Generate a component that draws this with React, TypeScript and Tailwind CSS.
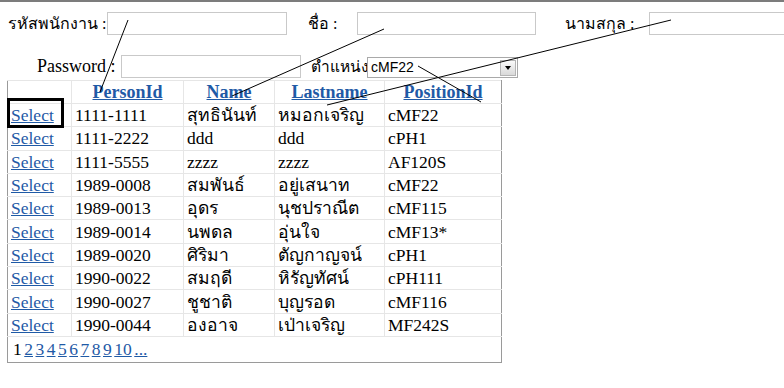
const rows = [
  ['1111-1111', 'สุทธินันท์', 'หมอกเจริญ', 'cMF22'],
  ['1111-2222', 'ddd', 'ddd', 'cPH1'],
  ['1111-5555', 'zzzz', 'zzzz', 'AF120S'],
  ['1989-0008', 'สมพันธ์', 'อยู่เสนาท', 'cMF22'],
  ['1989-0013', 'อุดร', 'นุชปราณีต', 'cMF115'],
  ['1989-0014', 'นพดล', 'อุ่นใจ', 'cMF13*'],
  ['1989-0020', 'ศิริมา', 'ตัญกาญจน์', 'cPH1'],
  ['1990-0022', 'สมฤดี', 'หิรัญทัศน์', 'cPH111'],
  ['1990-0027', 'ชูชาติ', 'บุญรอด', 'cMF116'],
  ['1990-0044', 'องอาจ', 'เป่าเจริญ', 'MF242S'],
];

const headers = ['PersonId', 'Name', 'Lastname', 'PositionId'];

function TextBox({ className }: { className: string }) {
  return <div className={`shrink-0 h-[23px] border border-[#c9c9c9] bg-white ${className}`} />;
}

export default function App() {
  return (
    <div className="relative w-[784px] h-[388px] overflow-hidden bg-white border-t-2 border-[#7c7c7c] font-['Liberation_Serif',serif] text-[17.5px] text-black">
      {/* search form */}
      <div className="flex items-center h-[23px] mt-[10px] pl-[8px]">
        <span className="shrink-0 w-[99px] whitespace-nowrap text-[16px]">รหัสพนักงาน :</span>
        <TextBox className="w-[180px]" />
        <span className="shrink-0 ml-[21px] w-[49px] whitespace-nowrap text-[16px]">ชื่อ :</span>
        <TextBox className="w-[179px]" />
        <span className="shrink-0 ml-[29px] w-[84px] whitespace-nowrap text-[16px]">นามสกุล :</span>
        <TextBox className="w-[150px]" />
      </div>
      <div className="flex items-center h-[23px] mt-[20px] pl-[37px]">
        <span className="shrink-0 w-[84px] whitespace-nowrap text-[18px]">Password :</span>
        <TextBox className="w-[180px]" />
        <span className="shrink-0 ml-[10px] w-[56px] whitespace-nowrap text-[15.5px]">ตำแหน่ง</span>
        <div className="shrink-0 flex items-center justify-between w-[151px] h-[21px] mt-[2px] border border-[#a9a9a9] bg-white pl-[3px] pr-[1px] font-['Liberation_Sans',sans-serif] text-[14px]">
          <span>cMF22</span>
          <div className="flex items-center justify-center w-[16px] h-[16px] border border-[#b5b5b5] bg-gradient-to-b from-[#fafafa] to-[#d9d9d9]">
            <div className="w-0 h-0 border-l-[3px] border-r-[3px] border-t-[4px] border-l-transparent border-r-transparent border-t-black" />
          </div>
        </div>
      </div>

      {/* grid */}
      <table className="ml-[7px] mt-[2px] w-[494px] border-collapse border border-t-0 border-[#9a9a9a] table-fixed">
        <colgroup>
          <col className="w-[64px]" />
          <col className="w-[112px]" />
          <col className="w-[91px]" />
          <col className="w-[110px]" />
          <col className="w-[117px]" />
        </colgroup>
        <thead>
          <tr className="h-[23px]">
            <th className="border border-[#e6e6e6] border-l-[#9a9a9a]" />
            {headers.map((h) => (
              <th key={h} className="border border-[#e6e6e6] last:border-r-[#9a9a9a] text-center font-bold text-[18px] leading-[20px]">
                <a href="#" className="text-[#1f5aa6] underline">{h}</a>
              </th>
            ))}
          </tr>
        </thead>
        <tbody>
          {rows.map((r) => (
            <tr key={r[0]} className="h-[23.3px]">
              <td className="border border-[#e6e6e6] border-l-[#9a9a9a] px-[3px] leading-[20px]">
                <a href="#" className="text-[#1f5aa6] underline">Select</a>
              </td>
              {r.map((c, i) => (
                <td key={i} className="border border-[#e6e6e6] last:border-r-[#9a9a9a] px-[3px] leading-[20px] whitespace-nowrap">
                  {c}
                </td>
              ))}
            </tr>
          ))}
          <tr className="h-[26px]">
            <td colSpan={5} className="border border-[#9a9a9a] border-t-[#e6e6e6] px-[5px] leading-[20px]">
              <span>1</span>
              {['2', '3', '4', '5', '6', '7', '8', '9', '10', '...'].map((p) => (
                <a key={p} href="#" className="ml-[2.5px] text-[#1f5aa6] underline">{p}</a>
              ))}
            </td>
          </tr>
        </tbody>
      </table>

      {/* highlight box on first Select */}
      <div className="absolute left-[7px] top-[96px] w-[57px] h-[30px] border-[3px] border-black" />

      {/* annotation lines */}
      <svg className="absolute inset-0 pointer-events-none" width="784" height="388">
        <g stroke="#000" strokeWidth="1">
          <line x1="128" y1="18" x2="100" y2="90" />
          <line x1="384" y1="27" x2="232" y2="94" />
          <line x1="671" y1="18" x2="327" y2="103" />
          <line x1="418" y1="64" x2="481" y2="100" />
        </g>
      </svg>
    </div>
  );
}
